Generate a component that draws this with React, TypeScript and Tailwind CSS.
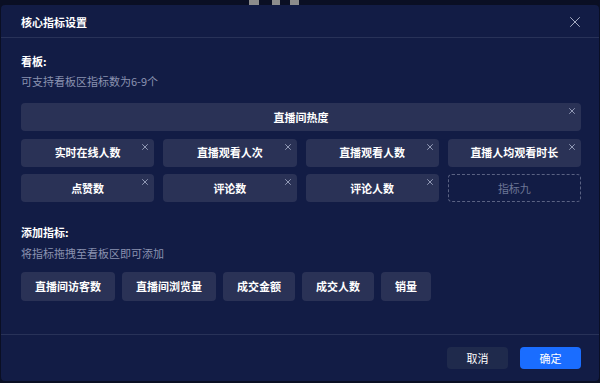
import { X } from 'lucide-react';

const board = [
  '实时在线人数',
  '直播观看人次',
  '直播观看人数',
  '直播人均观看时长',
  '点赞数',
  '评论数',
  '评论人数',
];

const pool = ['直播间访客数', '直播间浏览量', '成交金额', '成交人数', '销量'];

function Tile({ label, wide }: { label: string; wide?: boolean }) {
  return (
    <div
      className={`relative flex h-[28px] items-center justify-center rounded-[4px] bg-[#2a3256] text-[11px] font-bold text-white ${
        wide ? 'col-span-4' : ''
      }`}
    >
      {label}
      <X className="absolute right-[4px] top-[3px] h-[10px] w-[10px] text-[#9aa2bd]" strokeWidth={2.2} />
    </div>
  );
}

export default function App() {
  return (
    <div
      className="relative h-[383px] w-[600px] overflow-hidden bg-[#0a0f24] pt-[5px] pl-[1px]"
      style={{ fontFamily: '"Noto Sans CJK SC", "Noto Sans", sans-serif' }}
    >
      {/* bits of page behind the dialog */}
      <div className="absolute left-[249px] top-0 h-[5px] w-[10px] bg-[#8c8c8c]" />
      <div className="absolute left-[272px] top-0 h-[5px] w-[8px] bg-[#8c8c8c]" />
      <div className="absolute left-[290px] top-0 h-[5px] w-[9px] bg-[#8c8c8c]" />

      <div className="relative flex h-[376px] w-[598px] flex-col rounded-[4px] bg-[#121c45]">
        <div className="flex h-[33px] items-center justify-between border-b border-[#283258] pl-[20px] pr-[15px] pt-[2px]">
          <span className="text-[11px] font-bold text-white">核心指标设置</span>
          <X className="h-[18px] w-[18px] text-[#a9afc4]" strokeWidth={1.3} />
        </div>

        <div className="flex flex-1 flex-col pl-[20px] pr-[18px] pt-[15px]">
          <div className="text-[11px] font-bold leading-[16px] text-white">看板:</div>
          <div className="mt-[4px] text-[11px] leading-[16px] text-[#8a92b0]">可支持看板区指标数为6-9个</div>

          <div className="mt-[14px] grid grid-cols-4 gap-x-[9px] gap-y-[7.5px]">
            <Tile label="直播间热度" wide />
            {board.map((b) => (
              <Tile key={b} label={b} />
            ))}
            <div className="flex h-[28px] items-center justify-center rounded-[4px] border border-dashed border-[#5a6283] text-[11px] text-[#6d7696]">
              指标九
            </div>
          </div>

          <div className="mt-[22px] text-[11px] font-bold leading-[16px] text-white">添加指标:</div>
          <div className="mt-[5px] text-[11px] leading-[16px] text-[#8a92b0]">将指标拖拽至看板区即可添加</div>

          <div className="mt-[11px] flex gap-[7px]">
            {pool.map((p) => (
              <div
                key={p}
                className="flex h-[29px] items-center rounded-[4px] bg-[#2a3256] px-[14px] text-[11px] font-bold text-white"
              >
                {p}
              </div>
            ))}
          </div>
        </div>

        <div className="flex h-[47px] items-start justify-end gap-[12px] border-t border-[#283258] pr-[18px] pt-[12px]">
          <button className="h-[22px] w-[61px] rounded-[4px] bg-[#1f2a4c] text-[11px] text-white">取消</button>
          <button className="h-[22px] w-[61px] rounded-[4px] bg-[#1a6dff] text-[11px] text-white">确定</button>
        </div>
      </div>
    </div>
  );
}
